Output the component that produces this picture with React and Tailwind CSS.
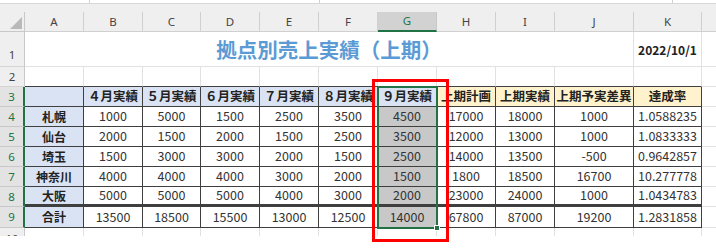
const COLS = ["A", "B", "C", "D", "E", "F", "G", "H", "I", "J", "K"];

const rows = [
  ["札幌", "1000", "5000", "1500", "2500", "3500", "4500", "17000", "18000", "1000", "1.0588235"],
  ["仙台", "2000", "1500", "2000", "1500", "2500", "3500", "12000", "13000", "1000", "1.0833333"],
  ["埼玉", "1500", "3000", "3000", "2000", "1500", "2500", "14000", "13500", "-500", "0.9642857"],
  ["神奈川", "4000", "4000", "4000", "3000", "2000", "1500", "1800", "18500", "16700", "10.277778"],
  ["大阪", "5000", "5000", "5000", "4000", "3000", "2000", "23000", "24000", "1000", "1.0434783"],
  ["合計", "13500", "18500", "15500", "13000", "12500", "14000", "67800", "87000", "19200", "1.2831858"],
];

const heads = ["", "４月実績", "５月実績", "６月実績", "７月実績", "８月実績", "９月実績", "上期計画", "上期実績", "上期予実差異", "達成率"];

const jp = "font-['Noto_Sans_CJK_JP','Noto_Sans',sans-serif]";

function RowHead({ n, sel, className = "" }) {
  return (
    <div
      className={`flex items-center justify-center border-b text-[11.5px] font-['Noto_Sans',sans-serif] ${
        sel
          ? "bg-[#e3e3e3] text-[#217346] border-r-2 border-r-[#217346] border-b-[#c8c8c8]"
          : "bg-[#efefef] text-[#444] border-r border-r-[#c8c8c8] border-b-[#d4d4d4]"
      } ${className}`}
    >
      {n}
    </div>
  );
}

export default function App() {
  return (
    <div className={`relative w-[716px] h-[251px] bg-white overflow-hidden ${jp}`}>
      {/* top strip */}
      <div className="h-[3px] bg-white flex">
        <div className="w-[90px] border-r border-[#d0d0d0]" />
        <div className="w-[230px] border-r border-[#d0d0d0]" />
        <div className="w-[353px] border-r border-[#d0d0d0]" />
      </div>
      <div className="h-[9px] bg-[#efefef] border-t border-[#d8d8d8]" />

      <div className="grid grid-cols-[25px_59px_59px_58px_59px_59px_59px_59px_59px_59px_79px_68px_14px]">
        {/* column header row */}
        <div className="h-5 bg-[#efefef] border-r border-b border-[#c8c8c8] flex items-end justify-end p-[2px]">
          <svg width="12" height="12" viewBox="0 0 12 12">
            <polygon points="12,0 12,12 0,12" fill="#b9b9b9" />
          </svg>
        </div>
        {COLS.map((c) =>
          c === "G" ? (
            <div
              key={c}
              className="h-5 bg-[#d2d2d2] border-r border-[#c8c8c8] border-b-2 border-b-[#217346] flex items-center justify-center text-[11.5px] text-[#217346] font-['Noto_Sans',sans-serif]"
            >
              {c}
            </div>
          ) : (
            <div
              key={c}
              className="h-5 bg-[#efefef] border-r border-b border-[#d0d0d0] flex items-center justify-center text-[11.5px] text-[#444] font-['Noto_Sans',sans-serif]"
            >
              {c}
            </div>
          )
        )}
        <div className="h-5 bg-[#efefef] border-b border-[#d0d0d0]" />

        {/* row 1 */}
        <RowHead n="1" className="h-[35px] !items-end pb-[3px]" />
        <div className="col-span-10 h-[35px] border-r border-b border-[#e1e1e1] flex items-center justify-center text-[20.5px] font-bold text-[#5b9bd5]">
          拠点別売上実績（上期）
        </div>
        <div className="h-[35px] border-r border-b border-[#e1e1e1] flex items-end justify-center pb-[7px] text-[12px] font-bold text-[#222]">
          2022/10/1
        </div>
        <div className="h-[35px] border-b border-[#e1e1e1]" />

        {/* row 2 */}
        <RowHead n="2" className="h-5" />
        {COLS.map((c) => (
          <div key={c} className="h-5 border-r border-r-[#e1e1e1] border-b border-b-[#3f3f3f]" />
        ))}
        <div className="h-5 border-b border-[#e1e1e1]" />

        {/* row 3 headers */}
        <RowHead n="3" sel className="h-5" />
        {heads.map((h, i) => (
          <div
            key={i}
            className={`h-5 border-r border-b border-[#3f3f3f] flex items-center justify-center overflow-hidden whitespace-nowrap text-[12.5px] font-bold text-[#222] ${
              i >= 7 ? "bg-[#fff2cc]" : "bg-[#dae3f3]"
            }`}
          >
            {h}
          </div>
        ))}
        <div className="h-5 border-b border-[#e1e1e1]" />

        {/* data rows */}
        {rows.map((r, ri) => (
          <div key={ri} className="contents">
            <RowHead n={String(ri + 4)} sel className={ri === 5 ? "h-[21px]" : "h-5"} />
            {r.map((v, ci) => (
              <div
                key={ci}
                className={`border-r border-[#3f3f3f] flex items-center justify-center whitespace-nowrap ${
                  ri === 4 ? "h-5 border-b-[3px]" : ri === 5 ? "h-[21px] border-b" : "h-5 border-b"
                } ${
                  ci === 0
                    ? "bg-[#dae3f3] font-bold text-[12px] text-[#222]"
                    : ci === 6
                    ? "bg-[#c8c8c8] text-[12.5px] text-[#333]"
                    : "bg-white text-[12.5px] text-[#333]"
                }`}
              >
                {v}
              </div>
            ))}
            <div className={`${ri === 5 ? "h-[21px]" : "h-5"} border-b border-[#e1e1e1]`} />
          </div>
        ))}

        {/* row 10 (partial) */}
        <div className="h-2 bg-[#efefef] border-r border-[#c8c8c8] overflow-hidden flex justify-center">
          <span className="text-[11.5px] leading-none pt-[5px] text-[#444] font-['Noto_Sans',sans-serif]">10</span>
        </div>
        {COLS.map((c) => (
          <div key={c} className="h-2 border-r border-[#e1e1e1]" />
        ))}
        <div className="h-2" />
      </div>

      {/* selection on column G */}
      <div className="absolute left-[377px] top-[86px] w-[61px] h-[143px] border-2 border-[#217346] pointer-events-none" />
      <div className="absolute left-[434px] top-[225px] w-[6px] h-[6px] bg-[#217346] border border-white" />

      {/* red highlight */}
      <div className="absolute left-[372px] top-[79px] w-[77px] h-[163px] border-[3px] border-[#ff0000]" />
    </div>
  );
}
